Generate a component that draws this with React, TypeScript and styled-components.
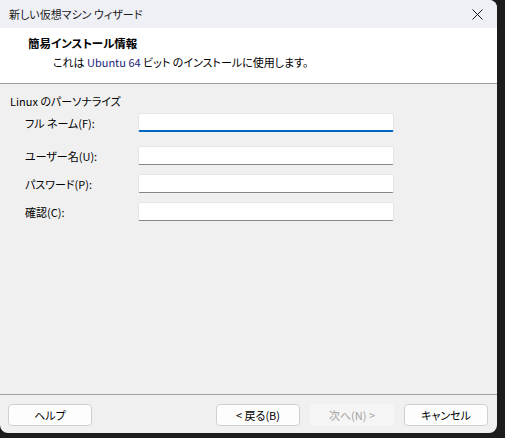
import styled, { createGlobalStyle } from 'styled-components';

const GlobalStyle = createGlobalStyle`
    html, body {
        margin : 0;
        padding : 0;
        background-color : #1c1c1c;
        width : 505px;
        height : 438px;
        overflow : hidden;
    }
    * {
        box-sizing : border-box;
    }
`

const FONT = `"Noto Sans CJK JP", "Noto Sans", sans-serif`;

type Field = { label : string, focused? : boolean, secret? : boolean };

const fields : Field[] = [
    { label : 'フル ネーム(F):', focused : true },
    { label : 'ユーザー名(U):' },
    { label : 'パスワード(P):', secret : true },
    { label : '確認(C):', secret : true },
];

const App = () => {
    return (
        <>
            <GlobalStyle />
            <StWindow>
                <StTitleBar>
                    <StTitle>新しい仮想マシン ウィザード</StTitle>
                    <StClose aria-label = "close">
                        <svg width = "11" height = "11" viewBox = "0 0 11 11">
                            <path d = "M0.5 0.5 L10.5 10.5 M10.5 0.5 L0.5 10.5" stroke = "#1a1a1a" strokeWidth = "1" fill = "none" />
                        </svg>
                    </StClose>
                </StTitleBar>
                <StHeader>
                    <StHeading>簡易インストール情報</StHeading>
                    <StSubHeading>これは <StOs>Ubuntu 64</StOs> ビット のインストールに使用します。</StSubHeading>
                </StHeader>
                <StBody>
                    <StGroupTitle>Linux のパーソナライズ</StGroupTitle>
                    <StForm>
                        {fields.map((f, i) => (
                            <StRow key = {f.label} $first = {i === 0}>
                                <StLabel>{f.label}</StLabel>
                                <StInput $focused = {!!f.focused} type = {f.secret ? 'password' : 'text'} />
                            </StRow>
                        ))}
                    </StForm>
                </StBody>
                <StFooter>
                    <StButton>ヘルプ</StButton>
                    <StNavGroup>
                        <StButton>&lt; 戻る(B)</StButton>
                        <StButton disabled>次へ(N) &gt;</StButton>
                        <StButton>キャンセル</StButton>
                    </StNavGroup>
                </StFooter>
            </StWindow>
        </>
    )
}

export default App;

const StWindow = styled.div`
    width : 497px;
    height : 433px;
    display : flex;
    flex-direction : column;
    background-color : #f0f0f0;
    border-radius : 0 8px 8px 8px;
    overflow : hidden;
    font-family : ${FONT};
    font-size : 11px;
    font-feature-settings : "palt";
    color : #000;
`

const StTitleBar = styled.div`
    height : 28px;
    flex-shrink : 0;
    display : flex;
    align-items : center;
    justify-content : space-between;
    padding : 0 9px;
    background-color : #eff0f6;
`

const StTitle = styled.span`
    font-size : 11px;
    color : #1a1a1a;
    line-height : 1;
`

const StClose = styled.div`
    width : 20px;
    height : 20px;
    display : flex;
    align-items : center;
    justify-content : center;
    margin-right : 1px;
`

const StHeader = styled.div`
    height : 56px;
    flex-shrink : 0;
    background-color : #ffffff;
    border-bottom : 1px solid #a0a0a0;
    padding : 6px 0 0 28px;
`

const StHeading = styled.div`
    font-weight : 700;
    font-size : 11.5px;
    line-height : 18px;
`

const StSubHeading = styled.div`
    margin-left : 25px;
    line-height : 18px;
    margin-top : 1px;
`

const StOs = styled.span`
    color : #1c1c7a;
`

const StBody = styled.div`
    flex : 1;
    padding : 9px 0 0 10px;
`

const StGroupTitle = styled.div`
    line-height : 16px;
`

const StForm = styled.div`
    display : flex;
    flex-direction : column;
    padding-left : 15px;
    margin-top : 4px;
`

const StRow = styled.div<{ $first : boolean }>`
    display : flex;
    align-items : center;
    margin-bottom : ${p => p.$first ? '14px' : '9px'};
`

const StLabel = styled.label`
    width : 113px;
    line-height : 16px;
`

const StInput = styled.input<{ $focused : boolean }>`
    width : 256px;
    height : 19px;
    border : 1px solid #e5e5e5;
    border-bottom : ${p => p.$focused ? '2px solid #0067c0' : '1px solid #868686'};
    border-radius : 2px;
    background-color : #ffffff;
    outline : none;
    padding : 0 4px;
    font-family : ${FONT};
    font-size : 11px;
`

const StFooter = styled.div`
    height : 39px;
    flex-shrink : 0;
    border-top : 1px solid #a0a0a0;
    display : flex;
    align-items : flex-start;
    justify-content : space-between;
    padding : 9px 9px 0 8px;
`

const StNavGroup = styled.div`
    display : flex;
    gap : 10px;
`

const StButton = styled.button`
    width : 84px;
    height : 22px;
    border : 1px solid #d0d0d0;
    border-radius : 4px;
    background-color : #fdfdfd;
    font-family : ${FONT};
    font-size : 11px;
    font-feature-settings : "palt";
    color : #000;
    padding : 0;
    line-height : 1;
    &:disabled {
        background-color : #f5f5f5;
        border-color : #f5f5f5;
        color : #a2a2a2;
    }
`
